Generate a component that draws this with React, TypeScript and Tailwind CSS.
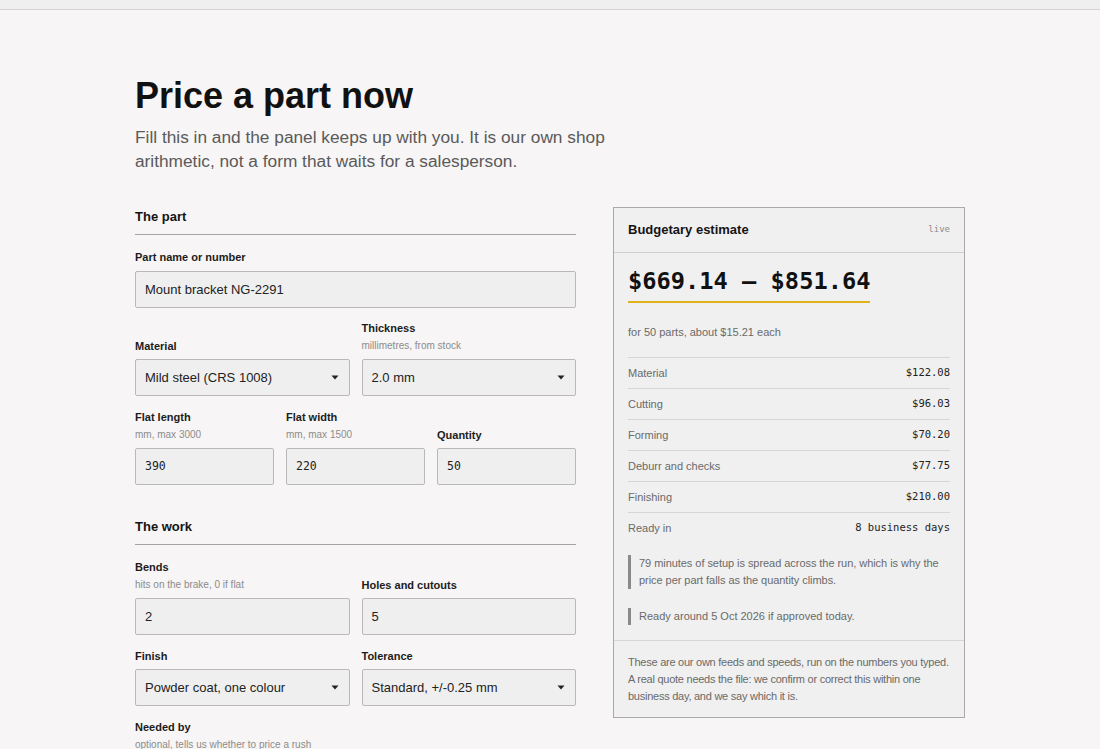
import React from "react";

const sans = { fontFamily: '"Liberation Sans", Arial, Helvetica, sans-serif' };
const mono = '[font-family:"DejaVu_Sans_Mono",monospace]';

function Label({ children }: { children: React.ReactNode }) {
  return <div className="text-[11px] leading-[16px] font-bold text-[#1c1c1c]">{children}</div>;
}

function Hint({ children }: { children: React.ReactNode }) {
  return <div className="mt-[2px] text-[10px] leading-[16px] text-[#8c8c8c]">{children}</div>;
}

function Field({
  label,
  hint,
  gap = "mt-[5px]",
  children,
}: {
  label: string;
  hint?: string;
  gap?: string;
  children: React.ReactNode;
}) {
  return (
    <div className="flex flex-col">
      <Label>{label}</Label>
      {hint && <Hint>{hint}</Hint>}
      <div className={gap}>{children}</div>
    </div>
  );
}

function TextBox({ value, monoValue }: { value: string; monoValue?: boolean }) {
  return (
    <div
      className={`h-[37px] flex items-center px-[9px] bg-[#efefef] border border-[#b9b9b9] rounded-[2px] text-[#222] ${
        monoValue ? "text-[11.5px] [font-family:'DejaVu_Sans_Mono',monospace]" : "text-[13px]"
      }`}
    >
      {value}
    </div>
  );
}

function SelectBox({ value }: { value: string }) {
  return (
    <div className="h-[37px] flex items-center justify-between pl-[9px] pr-[10px] bg-[#efefef] border border-[#b9b9b9] rounded-[2px] text-[13px] text-[#222]">
      <span>{value}</span>
      <svg width="8" height="5" viewBox="0 0 8 5" className="text-[#222]">
        <path d="M0.5 0.5 L7.5 0.5 L4 4.5 Z" fill="currentColor" />
      </svg>
    </div>
  );
}

function SectionTitle({ children, className = "" }: { children: React.ReactNode; className?: string }) {
  return (
    <div
      className={`text-[13px] leading-[20px] font-bold text-[#141414] pb-[7px] border-b border-[#a3a3a3] ${className}`}
    >
      {children}
    </div>
  );
}

const costs: [string, string][] = [
  ["Material", "$122.08"],
  ["Cutting", "$96.03"],
  ["Forming", "$70.20"],
  ["Deburr and checks", "$77.75"],
  ["Finishing", "$210.00"],
  ["Ready in", "8 business days"],
];

export default function App() {
  return (
    <div className="min-h-[749px] bg-[#f7f5f5] text-[#141414]" style={sans}>
      <div className="h-[10px] bg-[#efefef] border-b border-[#d3d3d3]" />

      <div className="w-[830px] mx-auto pt-[66px] pb-[40px]">
        <h1 className="text-[36px] leading-[40px] font-bold text-[#111]">Price a part now</h1>
        <p className="mt-[9px] max-w-[480px] text-[17.3px] leading-[24px] text-[#5a5a5a]">
          Fill this in and the panel keeps up with you. It is our own shop arithmetic, not a form
          that waits for a salesperson.
        </p>

        <div className="mt-[34px] grid grid-cols-[441px_352px] gap-x-[37px] items-start">
          {/* form */}
          <div className="flex flex-col">
            <SectionTitle>The part</SectionTitle>

            <div className="mt-[14px]">
              <Field label="Part name or number" gap="mt-[6px]">
                <TextBox value="Mount bracket NG-2291" />
              </Field>
            </div>

            <div className="mt-[12px] grid grid-cols-2 gap-x-[12px] items-end">
              <Field label="Material">
                <SelectBox value="Mild steel (CRS 1008)" />
              </Field>
              <Field label="Thickness" hint="millimetres, from stock">
                <SelectBox value="2.0 mm" />
              </Field>
            </div>

            <div className="mt-[13px] grid grid-cols-3 gap-x-[12px] items-end">
              <Field label="Flat length" hint="mm, max 3000">
                <TextBox value="390" monoValue />
              </Field>
              <Field label="Flat width" hint="mm, max 1500">
                <TextBox value="220" monoValue />
              </Field>
              <Field label="Quantity">
                <TextBox value="50" monoValue />
              </Field>
            </div>

            <SectionTitle className="mt-[32px]">The work</SectionTitle>

            <div className="mt-[14px] grid grid-cols-2 gap-x-[12px] items-end">
              <Field label="Bends" hint="hits on the brake, 0 if flat">
                <TextBox value="2" />
              </Field>
              <Field label="Holes and cutouts">
                <TextBox value="5" />
              </Field>
            </div>

            <div className="mt-[13px] grid grid-cols-2 gap-x-[12px] items-end">
              <Field label="Finish">
                <SelectBox value="Powder coat, one colour" />
              </Field>
              <Field label="Tolerance">
                <SelectBox value="Standard, +/-0.25 mm" />
              </Field>
            </div>

            <div className="mt-[13px]">
              <Label>Needed by</Label>
              <Hint>optional, tells us whether to price a rush</Hint>
            </div>
          </div>

          {/* estimate panel */}
          <div className="border border-[#a9a9a9] bg-[#f0f0f0]">
            <div className="h-[45px] px-[14px] flex items-center justify-between border-b border-[#cfcfcf]">
              <span className="text-[13px] font-bold text-[#141414]">Budgetary estimate</span>
              <span className={`text-[9px] text-[#8a8a8a] ${mono}`}>live</span>
            </div>

            <div className="px-[14px] pt-[14px]">
              <div
                className={`inline-block text-[23.7px] leading-[29px] font-bold text-[#111] pb-[5px] border-b-2 border-[#e0b31c] ${mono}`}
              >
                $669.14 – $851.64
              </div>
              <div className="mt-[21px] text-[11px] leading-[16px] text-[#6a6a6a]">
                for 50 parts, about $15.21 each
              </div>

              <div className="mt-[17px]">
                {costs.map(([name, amount]) => (
                  <div
                    key={name}
                    className="h-[31px] flex items-center justify-between border-t border-[#d6d6d6]"
                  >
                    <span className="text-[11px] text-[#6a6a6a]">{name}</span>
                    <span className={`text-[10.5px] text-[#222] ${mono}`}>{amount}</span>
                  </div>
                ))}
              </div>

              <div className="mt-[12px] flex flex-col gap-[19px] pb-[15px]">
                <div className="border-l-[3px] border-[#8a8a8a] pl-[8px] text-[11px] leading-[17px] text-[#6a6a6a] tracking-[-0.05px]">
                  79 minutes of setup is spread across the run, which is why the price per part
                  falls as the quantity climbs.
                </div>
                <div className="border-l-[3px] border-[#8a8a8a] pl-[8px] text-[11px] leading-[17px] text-[#6a6a6a]">
                  Ready around 5 Oct 2026 if approved today.
                </div>
              </div>
            </div>

            <div className="border-t border-[#d6d6d6] pl-[14px] pr-[10px] pt-[13px] pb-[12px] text-[11px] leading-[17px] text-[#6a6a6a] tracking-[-0.25px]">
              These are our own feeds and speeds, run on the numbers you typed. A real quote needs
              the file: we confirm or correct this within one business day, and we say which it is.
            </div>
          </div>
        </div>
      </div>
    </div>
  );
}
